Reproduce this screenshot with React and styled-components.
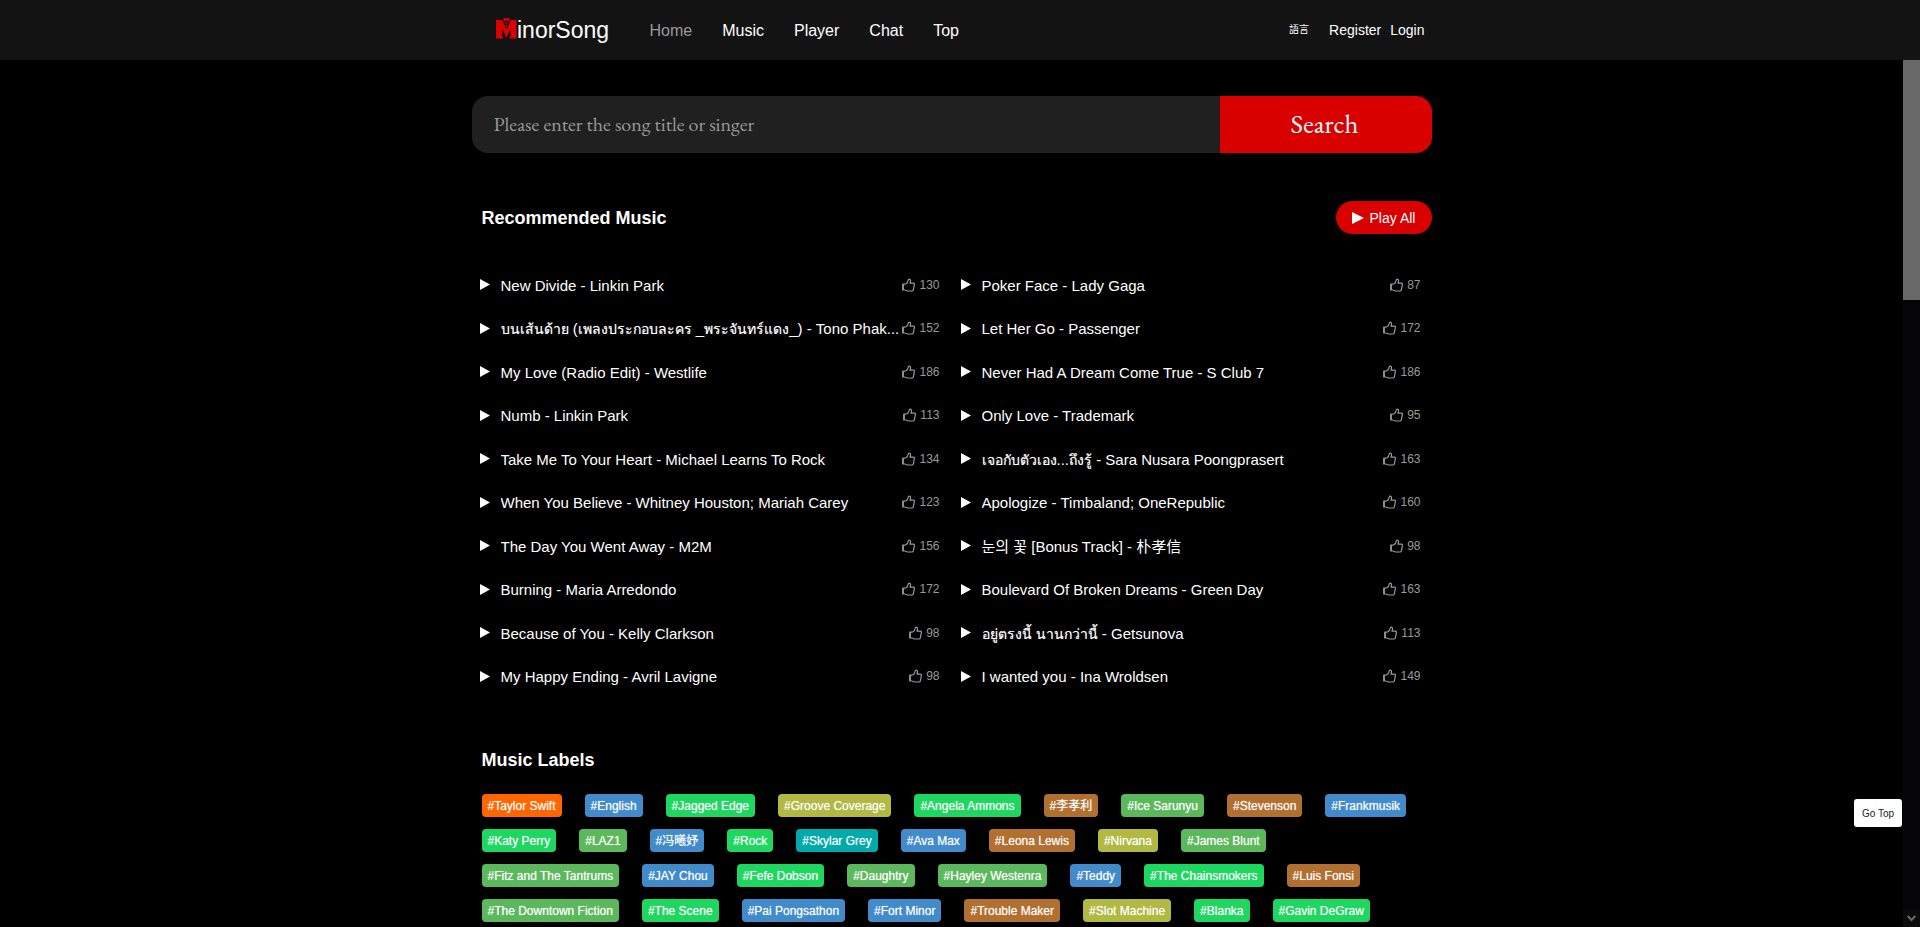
import React from "react";
import styled, { createGlobalStyle } from "styled-components";

const sans = `"Liberation Sans", Arial, "Noto Sans CJK SC", "Noto Sans CJK KR", sans-serif`;
const serif = `"EB Garamond", Garamond, "Liberation Serif", serif`;

const Global = createGlobalStyle`
  * { box-sizing: border-box; }
  body { margin: 0; background: #000; color: #fff; font-family: ${sans}; }
  a { color: inherit; text-decoration: none; }
  button { border: 0; font-family: inherit; color: inherit; cursor: pointer; }
`;

const Page = styled.div`
  height: 100vh;
  display: flex;
  flex-direction: column;
`;

const Header = styled.header`
  flex: none;
  height: 60px;
  background: #131313;
  padding-right: 17px;
`;

const HeaderInner = styled.div`
  max-width: 960px;
  height: 100%;
  margin: 0 auto;
  padding: 0 7px 0 24px;
  display: flex;
  align-items: center;
`;

const LogoLink = styled.a`
  display: flex;
  width: 115px;
`;

const Nav = styled.nav`
  display: flex;
  gap: 30px;
  margin-left: 39px;
  padding-top: 2px;
  flex: 1;
`;

const NavLink = styled.a`
  font-size: 16px;
  line-height: 20px;
  color: ${(p) => (p.$active ? "#999" : "#fff")};
`;

const Account = styled.div`
  display: flex;
  align-items: center;
  font-size: 14px;
  line-height: 20px;
  gap: 9px;
`;

const Language = styled.button`
  background: none;
  padding: 0;
  margin-right: 11px;
  font-size: 10px;
  line-height: 20px;
`;

const Body = styled.div`
  flex: 1;
  min-height: 0;
  display: flex;
`;

const Scroller = styled.main`
  flex: 1;
  min-width: 0;
  overflow-y: auto;
  scrollbar-width: none;
`;

const Container = styled.div`
  max-width: 960px;
  margin: 0 auto;
  padding-top: 36px;
`;

const SearchForm = styled.form`
  display: flex;
  height: 57px;
  border-radius: 16px;
  overflow: hidden;
`;

const SearchInput = styled.input`
  flex: 1;
  min-width: 0;
  border: 0;
  outline: 0;
  padding: 0 22px 2px;
  background: #202020;
  color: #fff;
  font-family: ${serif};
  font-size: 20px;
  &::placeholder { color: #999; opacity: 1; }
`;

const SearchButton = styled.button`
  width: 212px;
  padding: 0 2px 2px 0;
  background: #d90000;
  font-family: ${serif};
  font-size: 27px;
`;

const SectionHead = styled.div`
  display: flex;
  align-items: center;
  justify-content: space-between;
  height: 33px;
  margin-top: ${(p) => p.$top}px;
  padding-left: 10px;
`;

const Title = styled.h2`
  margin: 0;
  padding-top: 1px;
  font-size: 18px;
  line-height: 24px;
`;

const PlayAll = styled.button`
  display: flex;
  align-items: center;
  justify-content: center;
  gap: 6px;
  width: 96px;
  height: 33px;
  padding: 0;
  border-radius: 17px;
  background: #d90000;
  font-size: 14px;
`;

const Songs = styled.ul`
  list-style: none;
  margin: 29px 0 0;
  padding: 0 0 0 8px;
  display: grid;
  grid-template-columns: 460px 460px;
  column-gap: 21px;
  grid-auto-rows: 43px 44px;
`;

const Song = styled.li`
  display: flex;
  align-items: center;
`;

const PlayButton = styled.button`
  display: flex;
  background: none;
  padding: 0;
  margin-right: 11px;
`;

const SongLink = styled.a`
  flex: 1;
  min-width: 0;
  margin-right: 2px;
  padding-top: 2px;
  font-size: 15px;
  line-height: 22px;
  white-space: nowrap;
  overflow: hidden;
  text-overflow: ellipsis;
`;

const Thai = styled.span`
  font-size: 14px;
  text-shadow: 0 0 1px rgba(255, 255, 255, 0.5);
`;

const Likes = styled.span`
  display: flex;
  align-items: center;
  gap: 4px;
  color: #999;
  font-size: 12px;
  line-height: 16px;
`;

const Labels = styled.div`
  display: flex;
  flex-direction: column;
  gap: 12px;
  padding: 18px 0 5px 10px;
`;

const LabelRow = styled.div`
  display: flex;
  flex-wrap: wrap;
  gap: 12px 23px;
`;

const tones = {
  orange: "#ff6600",
  blue: "#428bca",
  lime: "#1ed760",
  olive: "#b1b943",
  brown: "#b17030",
  green: "#5cb85c",
  teal: "#00aaaa",
};

const Label = styled.a`
  height: 23px;
  padding: 0 6px;
  border-radius: 4px;
  background: ${(p) => tones[p.$tone]};
  font-size: 12px;
  line-height: 24px;
  text-shadow: 0 0 1px rgba(255, 255, 255, 0.6);
  white-space: nowrap;
`;

const Track = styled.div`
  flex: none;
  width: 17px;
  background: #050507;
  display: flex;
  flex-direction: column;
  justify-content: space-between;
`;

const Thumb = styled.div`
  height: 240px;
  background: #686868;
`;

const TrackEnd = styled.div`
  height: 17px;
  background: #0b0b0c;
  display: flex;
  align-items: center;
  justify-content: center;
`;

const GoTop = styled.button`
  position: fixed;
  right: 18px;
  bottom: 100px;
  width: 48px;
  height: 28px;
  padding: 0;
  border-radius: 3px;
  background: #fff;
  color: #222;
  font-size: 10px;
`;

const Logo = () => (
  <svg width="115" height="30" viewBox="0 0 115 30" role="img" aria-label="MinorSong">
    <path d="M0 5h6.500l4 9.500L14.500 5H20.500V23.500H13.500v-2h1V14l-4 8.500L6 14v7.500h1v2H0z" fill="#d90000" />
    <path d="M6.500 5h8l-4 9z" fill="#131313" />
    <path d="M7.500 2.500l3 1 3-1v4l-3-1-3 1z" fill="#d90000" />
    <circle cx="10.500" cy="8" r="1" fill="#d90000" />
    <circle cx="10.500" cy="11" r="1" fill="#d90000" />
    <text x="21" y="23" fill="#fff" fontFamily="Liberation Sans, sans-serif" fontSize="23">inorSong</text>
  </svg>
);

const PlayIcon = ({ w = 10, h = 11 }) => (
  <svg width={w} height={h} viewBox="0 0 10 11" preserveAspectRatio="none" aria-hidden="true">
    <path d="M0 0L10 5.500 0 11z" fill="#fff" />
  </svg>
);

const LikeIcon = () => (
  <svg width="13" height="14" viewBox="0 0 13 14" fill="none" stroke="#999" strokeWidth="1.2" strokeLinejoin="round" aria-hidden="true">
    <path d="M3.200 6.200H.7v5.800h2.500" />
    <path d="M1.300 6.500v5.500" />
    <path d="M3.300 6.200C5 5.500 6 4 6.200 2.200c.1-1.600 2.200-1.500 2.300.1.100 1-.1 2-.5 2.800h3.300c.8 0 1.200.5 1.100 1.200l-1 5.300c-.2.900-.6 1.400-1.400 1.400H5.600c-1 0-1.500-.5-2.300-1" />
  </svg>
);

/* Thai glyphs run large beside Latin text, so they are set one size down. */
const SongName = ({ text }) =>
  text
    .split(/([\u0e00-\u0e7f]+)/)
    .map((part, i) => (i % 2 ? <Thai key={i} lang="th">{part}</Thai> : part));

const songs = [
  ["New Divide - Linkin Park", 130],
  ["Poker Face - Lady Gaga", 87],
  ["บนเส้นด้าย (เพลงประกอบละคร _พระจันทร์แดง_) - Tono Phak...", 152],
  ["Let Her Go - Passenger", 172],
  ["My Love (Radio Edit) - Westlife", 186],
  ["Never Had A Dream Come True - S Club 7", 186],
  ["Numb - Linkin Park", 113],
  ["Only Love - Trademark", 95],
  ["Take Me To Your Heart - Michael Learns To Rock", 134],
  ["เจอกับตัวเอง...ถึงรู้ - Sara Nusara Poongprasert", 163],
  ["When You Believe - Whitney Houston; Mariah Carey", 123],
  ["Apologize - Timbaland; OneRepublic", 160],
  ["The Day You Went Away - M2M", 156],
  ["눈의 꽃 [Bonus Track] - 朴孝信", 98],
  ["Burning - Maria Arredondo", 172],
  ["Boulevard Of Broken Dreams - Green Day", 163],
  ["Because of You - Kelly Clarkson", 98],
  ["อยู่ตรงนี้ นานกว่านี้ - Getsunova", 113],
  ["My Happy Ending - Avril Lavigne", 98],
  ["I wanted you - Ina Wroldsen", 149],
];

const labelRows = [
  [["Taylor Swift", "orange"], ["English", "blue"], ["Jagged Edge", "lime"], ["Groove Coverage", "olive"], ["Angela Ammons", "lime"], ["李孝利", "brown"], ["Ice Sarunyu", "green"], ["Stevenson", "brown"], ["Frankmusik", "blue"]],
  [["Katy Perry", "lime"], ["LAZ1", "green"], ["冯曦妤", "blue"], ["Rock", "lime"], ["Skylar Grey", "teal"], ["Ava Max", "blue"], ["Leona Lewis", "brown"], ["Nirvana", "olive"], ["James Blunt", "green"]],
  [["Fitz and The Tantrums", "green"], ["JAY Chou", "blue"], ["Fefe Dobson", "lime"], ["Daughtry", "green"], ["Hayley Westenra", "green"], ["Teddy", "blue"], ["The Chainsmokers", "lime"], ["Luis Fonsi", "brown"]],
  [["The Downtown Fiction", "green"], ["The Scene", "lime"], ["Pai Pongsathon", "blue"], ["Fort Minor", "blue"], ["Trouble Maker", "brown"], ["Slot Machine", "olive"], ["Blanka", "lime"], ["Gavin DeGraw", "lime"]],
];

export default function App() {
  return (
    <Page>
      <Global />
      <Header>
        <HeaderInner>
          <LogoLink href="#"><Logo /></LogoLink>
          <Nav>
            {["Home", "Music", "Player", "Chat", "Top"].map((t, i) => (
              <NavLink key={t} href="#" $active={i === 0}>{t}</NavLink>
            ))}
          </Nav>
          <Account>
            <Language type="button">語言</Language>
            <a href="#">Register</a>
            <a href="#">Login</a>
          </Account>
        </HeaderInner>
      </Header>
      <Body>
        <Scroller>
          <Container>
            <SearchForm onSubmit={(e) => e.preventDefault()}>
              <SearchInput aria-label="Song title or singer" placeholder="Please enter the song title or singer" />
              <SearchButton type="submit">Search</SearchButton>
            </SearchForm>
            <SectionHead $top={48}>
              <Title>Recommended Music</Title>
              <PlayAll type="button"><PlayIcon w={12} h={12} />Play All</PlayAll>
            </SectionHead>
            <Songs>
              {songs.map(([name, likes]) => (
                <Song key={name}>
                  <PlayButton type="button" aria-label={"Play " + name}><PlayIcon /></PlayButton>
                  <SongLink href="#"><SongName text={name} /></SongLink>
                  <Likes><LikeIcon />{likes}</Likes>
                </Song>
              ))}
            </Songs>
            <SectionHead $top={45}>
              <Title>Music Labels</Title>
            </SectionHead>
            <Labels>
              {labelRows.map((row, i) => (
                <LabelRow key={i}>
                  {row.map(([name, tone]) => (
                    <Label key={name} href="#" $tone={tone}>#{name}</Label>
                  ))}
                </LabelRow>
              ))}
            </Labels>
          </Container>
        </Scroller>
        <Track aria-hidden="true">
          <Thumb />
          <TrackEnd>
            <svg width="9" height="7" viewBox="0 0 9 7" fill="none" stroke="#686868" strokeWidth="2">
              <path d="M.7 1L4.500 5 8.300 1" />
            </svg>
          </TrackEnd>
        </Track>
      </Body>
      <GoTop type="button">Go Top</GoTop>
    </Page>
  );
}
